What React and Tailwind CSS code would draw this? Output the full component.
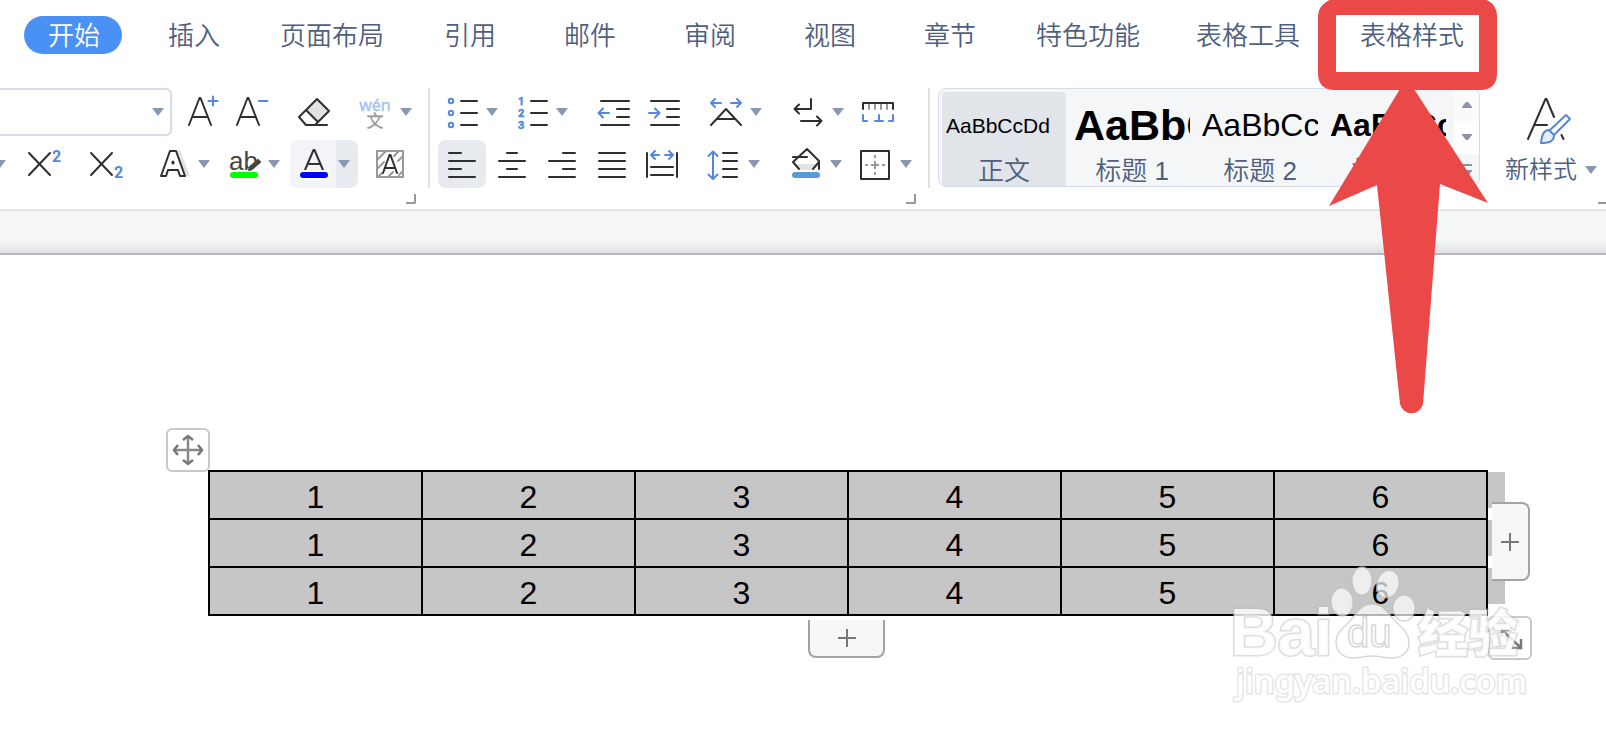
import React, { useState } from 'react';

const TABS = [
  { name: '开始', width: 'w-[98px]' },
  { name: '插入', width: 'w-[98px]' },
  { name: '页面布局', width: 'w-[134px]' },
  { name: '引用', width: 'w-[98px]' },
  { name: '邮件', width: 'w-[98px]' },
  { name: '审阅', width: 'w-[98px]' },
  { name: '视图', width: 'w-[98px]' },
  { name: '章节', width: 'w-[98px]' },
  { name: '特色功能', width: 'w-[134px]' },
  { name: '表格工具', width: 'w-[142px]' },
  { name: '表格样式', width: 'w-[142px]' },
];

const STYLES = [
  { name: '正文', sample: 'AaBbCcDd', look: 'text-[21px]' },
  { name: '标题 1', sample: 'AaBbCc', look: 'text-[43px] font-bold' },
  { name: '标题 2', sample: 'AaBbCc', look: 'text-[32px]' },
  { name: '标题 3', sample: 'AaBbCc', look: 'text-[32px] font-bold' },
];

const ROWS = [
  [1, 2, 3, 4, 5, 6],
  [1, 2, 3, 4, 5, 6],
  [1, 2, 3, 4, 5, 6],
];

const DARK = '#2f2f2f';
const BLUE = '#5588dd';
const GRAY = '#999999';

// Icons share a 40x48 box so that every toolbar row lines up
function Icon({ children, color = DARK }) {
  return (
    <svg className="w-10 h-12 shrink-0" viewBox="0 0 40 48" fill="none" stroke={color} strokeWidth="2" strokeLinecap="round" strokeLinejoin="round">
      {children}
    </svg>
  );
}

function Tool({ label, className = '', children }) {
  return (
    <button aria-label={label} className={`h-12 flex items-center justify-center shrink-0 ${className}`}>
      {children}
    </button>
  );
}

function Triangle({ className = '' }) {
  return (
    <svg className={`w-3 h-2 shrink-0 ${className}`} viewBox="0 0 12 8" fill="#8a97b1">
      <path d="M0 0h12L6 8z" />
    </svg>
  );
}

function Caret({ label, className = '' }) {
  return (
    <button aria-label={label} className={`w-[22px] h-12 flex items-center justify-center shrink-0 ${className}`}>
      <Triangle />
    </button>
  );
}

function Corner() {
  return (
    <div className="flex justify-end pr-3 pt-1.5">
      <button aria-label="更多设置" className="w-2.5 h-2.5 border-r-2 border-b-2 border-[#999999] rounded-br-xs"></button>
    </div>
  );
}

function FontGroup() {
  return (
    <div className="w-[428px] shrink-0">
      <div className="flex">
        <div className="relative w-[172px] h-12 mr-[11px] shrink-0">
          <select aria-label="字号" className="appearance-none w-full h-12 bg-white border-2 border-l-0 border-[#d3dcea] rounded-r-md">
            <option></option>
          </select>
          <Triangle className="absolute right-2 top-5 pointer-events-none" />
        </div>
        <Tool label="增大字号" className="mr-2">
          <Icon>
            <path d="M6 37L16.500 10h1L28 37M9.500 29h15" />
            <path d="M25.500 13h9M30 8.500v9" stroke={BLUE} />
          </Icon>
        </Tool>
        <Tool label="减小字号" className="mr-[23px]">
          <Icon>
            <path d="M6 37L16.500 10h1L28 37M9.500 29h15" />
            <path d="M28 13h8.500" stroke={BLUE} />
          </Icon>
        </Tool>
        <Tool label="清除格式" className="mr-[21px]">
          <Icon>
            <path d="M12 22L23 11l12 12-11 11z" fill="#e2e2e2" stroke="none" />
            <path d="M33 37H12l-7-8L23 11l12 12-13 13M12 22l12 12" />
          </Icon>
        </Tool>
        <Tool label="拼音指南">
          <Icon>
            <text x="20" y="23" textAnchor="middle" fontSize="16" fontFamily="Noto Sans, sans-serif" fill="#a6c2f0" stroke="#a6c2f0" strokeWidth="0.4">wén</text>
            <text x="20" y="39" textAnchor="middle" fontSize="17" fontFamily="Noto Sans CJK SC, sans-serif" fill={GRAY} stroke={GRAY} strokeWidth="0.3">文</text>
          </Icon>
        </Tool>
        <Caret label="拼音指南选项" />
      </div>

      <div className="flex mt-1">
        <button aria-label="下划线选项" className="w-1.5 h-12 mr-[18px] overflow-hidden flex items-center justify-end shrink-0">
          <Triangle />
        </button>
        <Tool label="上标" className="mr-[22px]">
          <Icon>
            <path d="M5 13l21 22M26 13L5 35" />
            <text x="28" y="22" fontSize="16" fontWeight="700" fontFamily="Roboto, sans-serif" fill={BLUE} stroke="none">2</text>
          </Icon>
        </Tool>
        <Tool label="下标" className="mr-[27px]">
          <Icon>
            <path d="M5 13l21 22M26 13L5 35" />
            <text x="28" y="38" fontSize="16" fontWeight="700" fontFamily="Roboto, sans-serif" fill={BLUE} stroke="none">2</text>
          </Icon>
        </Tool>
        <Tool label="文字效果">
          <Icon>
            <path d="M22 10h5l10 26H27z" fill="#e2e2e2" stroke="none" />
            <path d="M8 36l9-25h6l9 25h-5l-2-6H15l-2 6z" fill="#fff" />
            <path d="M20 22v1" stroke={DARK} strokeWidth="3" />
          </Icon>
        </Tool>
        <Caret label="文字效果选项" className="mr-2" />
        <Tool label="突出显示">
          <Icon>
            <text x="6" y="30" fontSize="26" fontFamily="Liberation Sans, sans-serif" fill="#444" stroke="none">ab</text>
            <path d="M27 31l10-10" stroke="#fff" strokeWidth="6" />
            <path d="M27 27l8-7 2 2-8 7-3 1z" stroke="#444" fill="#444" />
            <path d="M10 35h22" stroke="#00ff00" strokeWidth="6" />
          </Icon>
        </Tool>
        <Caret label="突出显示选项" className="mr-[5px]" />
        <Tool label="字体颜色" className="w-[46px] bg-[#f3f4f7] rounded-l-lg">
          <Icon>
            <path d="M12 30l8.500-20h1L30 30M15 24h12" />
            <path d="M10 35h22" stroke="#fff" strokeWidth="10" />
            <path d="M10 35h22" stroke="#0000ff" strokeWidth="6" />
          </Icon>
        </Tool>
        <Caret label="字体颜色选项" className="bg-[#e7eaef] rounded-r-lg pr-1.5 mr-3" />
        <Tool label="字符底纹">
          <Icon>
            <path d="M7 11h26v26H7z" stroke={GRAY} />
            <path d="M8 19l8-8M8 28l6-6M24 16l5-5M28 21l5-5M9 36l3-3M19 36l4-4M29 35l4-4" stroke={GRAY} />
            <path d="M13 33l6.500-18h1L27 33M15 28h10" />
          </Icon>
        </Tool>
      </div>
      <Corner />
    </div>
  );
}

function ParagraphGroup() {
  return (
    <div className="w-[498px] shrink-0">
      <div className="flex pl-[11px]">
        <Tool label="项目符号">
          <Icon>
            <g stroke={BLUE}>
              <circle cx="10" cy="13" r="2.200" />
              <circle cx="10" cy="25" r="2.200" />
              <circle cx="10" cy="37" r="2.200" />
            </g>
            <path d="M20 13h16M20 25h16M20 37h16" />
          </Icon>
        </Tool>
        <Caret label="项目符号选项" className="mr-2" />
        <Tool label="编号">
          <Icon>
            <g fontSize="11" fontWeight="700" fontFamily="Roboto, sans-serif" fill={BLUE} stroke={BLUE} strokeWidth="0.5">
              <text x="7" y="17">1</text>
              <text x="7" y="29">2</text>
              <text x="7" y="41">3</text>
            </g>
            <path d="M20 13h16M20 25h16M20 37h16" />
          </Icon>
        </Tool>
        <Caret label="编号选项" className="mr-[21px]" />
        <Tool label="减少缩进" className="mr-2.5">
          <Icon>
            <path d="M7 13h28M23 21h12M23 29h12M7 37h28" />
            <path d="M15 25H5M9 20.500L4.500 25 9 29.500" stroke={BLUE} />
          </Icon>
        </Tool>
        <Tool label="增加缩进" className="mr-[21px]">
          <Icon>
            <path d="M7 13h28M23 21h12M23 29h12M7 37h28" />
            <path d="M5 25h10M11 20.500l4.500 4.500-4.500 4.500" stroke={BLUE} />
          </Icon>
        </Tool>
        <Tool label="字符缩放">
          <Icon>
            <path d="M6 37l15-16 15 16M12 31h18" />
            <path d="M16 15H6M10 11l-4 4 4 4M26 15h10M32 11l4 4-4 4" stroke={BLUE} />
          </Icon>
        </Tool>
        <Caret label="字符缩放选项" className="mr-5" />
        <Tool label="显示段落标记">
          <Icon>
            <path d="M24 11v10H8M12 16.500L7.500 21l4.500 4.500M14 33h20M30 28.500l4.500 4.500-4.500 4.500" />
          </Icon>
        </Tool>
        <Caret label="段落标记选项" className="mr-[9px]" />
        <Tool label="制表位">
          <Icon>
            <path d="M11 16v5M17 16v5M23 16v5M29 16v5" stroke={GRAY} />
            <path d="M5 21v-6h30v6" />
            <path d="M5 27v6h4M21 27v6M17 33h8M35 27v6h-4" stroke={BLUE} />
          </Icon>
        </Tool>
      </div>

      <div className="flex mt-1 pl-2">
        <Tool label="左对齐" className="w-12 mr-0.5 bg-[#e7eaef] rounded-lg">
          <Icon><path d="M7 13h12M7 21h26M7 29h12M7 37h26" /></Icon>
        </Tool>
        <Tool label="居中" className="w-12 mr-0.5">
          <Icon><path d="M15 13h10M7 21h26M15 29h10M7 37h26" /></Icon>
        </Tool>
        <Tool label="右对齐" className="w-12 mr-0.5">
          <Icon><path d="M21 13h12M7 21h26M21 29h12M7 37h26" /></Icon>
        </Tool>
        <Tool label="两端对齐" className="w-12 mr-0.5">
          <Icon><path d="M7 13h26M7 21h26M7 29h26M7 37h26" /></Icon>
        </Tool>
        <Tool label="分散对齐" className="w-12 mr-[17px]">
          <Icon>
            <path d="M5 13v24M35 13v24M9 27h22M9 35h22" />
            <path d="M17 15H9M13 11l-4 4 4 4M23 15h8M27 11l4 4-4 4" stroke={BLUE} />
          </Icon>
        </Tool>
        <Tool label="行距">
          <Icon>
            <path d="M10 12v26M5.500 16L10 11.500l4.500 4.500M5.500 34.500L10 39l4.500-4.500" stroke={BLUE} />
            <path d="M20 13h14M20 21h14M20 29h14M20 37h14" />
          </Icon>
        </Tool>
        <Caret label="行距选项" className="mr-5" />
        <Tool label="底纹颜色">
          <Icon>
            <path d="M11 24h22l-6 6H15z" fill="#e2e2e2" stroke="none" />
            <path d="M14 29l-6-7L22 9l12 12v8M28 29l6-7M8 17h14" />
            <path d="M10 35h22" stroke="#5b9bd5" strokeWidth="6" />
          </Icon>
        </Tool>
        <Caret label="底纹颜色选项" className="mr-2" />
        <Tool label="边框">
          <Icon>
            <path d="M6 11h28v28H6z" />
            <path d="M10 25h3M16 25h8M27 25h3M20 15v3M20 21v8M20 32v3" stroke={GRAY} strokeLinecap="butt" />
          </Icon>
        </Tool>
        <Caret label="边框选项" />
      </div>
      <Corner />
    </div>
  );
}

function StyleGallery() {
  const [selected, setSelected] = useState('正文');

  return (
    <div className="w-[542px] h-[99px] shrink-0 flex bg-[#f5f6f8] border border-[#d0dbec] rounded-lg overflow-hidden">
      <div className="flex gap-1 pl-[3px] pt-[3px]">
        {STYLES.map((s) => (
          <button
            key={s.name}
            onClick={() => setSelected(s.name)}
            className={`w-[124px] px-1 flex flex-col rounded-t-sm ${selected === s.name ? 'bg-[#e1e4e9]' : ''}`}
          >
            <span className={`w-full h-[66px] overflow-hidden whitespace-nowrap text-left leading-[67px] text-black ${s.look}`}>{s.sample}</span>
            <span className="w-full text-center text-[26px] leading-[26px] text-[#4f5f80] font-[350]">{s.name}</span>
          </button>
        ))}
      </div>
      <div className="flex-1 ml-1 flex flex-col">
        <button aria-label="上一行" className="flex-1 flex items-center justify-center bg-[#fafafb]">
          <svg className="w-2.5 h-1.5" viewBox="0 0 10 6" fill="#8a93a5"><path d="M0 6V5l4-5h2l4 5v1z" /></svg>
        </button>
        <button aria-label="下一行" className="flex-1 flex items-center justify-center bg-white">
          <svg className="w-2.5 h-1.5" viewBox="0 0 10 6" fill="#8a93a5"><path d="M0 0v1l4 5h2l4-5V0z" /></svg>
        </button>
        <button aria-label="展开样式" className="flex-1 flex items-center justify-center bg-[#f5f6f8]">
          <svg className="w-2.5 h-3" viewBox="0 0 10 12" fill="#8a93a5"><path d="M0 0h10v2H0zM0 6v1l4 5h2l4-5V6z" /></svg>
        </button>
      </div>
    </div>
  );
}

function NewStyle() {
  return (
    <div className="flex-1 min-w-[124px]">
      <div className="h-[108px] pl-[25px] pt-2">
        <button className="flex flex-col">
          <svg className="w-12 h-12 ml-5" viewBox="0 0 48 48" fill="none" stroke={DARK} strokeWidth="2" strokeLinecap="round" strokeLinejoin="round">
            <path d="M3 43L20.500 3h1L29 21M10 29h12M36.500 39l2 4" />
            <path d="M25 34l16-15 4 4-16 16" stroke={BLUE} />
            <path d="M24 34c-5 0-7 4-8 13 7 0 13-1 13-8z" stroke={BLUE} fill="#e8effb" />
          </svg>
          <span className="flex items-center gap-2 text-2xl leading-[52px] text-[#4f5f80] font-[350] whitespace-nowrap">
            新样式
            <Triangle />
          </span>
        </button>
      </div>
      <div className="flex justify-end pt-1.5">
        <div className="w-2 h-0.5 bg-[#999999]"></div>
      </div>
    </div>
  );
}

function Plus() {
  return (
    <svg className="w-5 h-5" viewBox="0 0 20 20" stroke="#777" strokeWidth="2">
      <path d="M1 10h18M10 1v18" />
    </svg>
  );
}

function DocumentTable() {
  return (
    <div className="relative ml-[208px] mr-[118px] mt-[215px]">
      <table className="w-full table-fixed border-collapse bg-[#c6c6c6] text-black text-[32px] leading-[42px] text-center">
        <tbody>
          {ROWS.map((row, i) => (
            <tr key={i}>
              {row.map((cell) => (
                <td key={cell} className="border-2 border-black p-0 pt-1">{cell}</td>
              ))}
            </tr>
          ))}
        </tbody>
      </table>

      {/* Маркеры конца строк */}
      <div className="absolute left-full top-0.5 flex flex-col gap-3">
        {ROWS.map((_, i) => (
          <div key={i} className="w-[17px] h-9 bg-[#c6c6c6]"></div>
        ))}
      </div>

      <button aria-label="移动表格" className="absolute right-full bottom-full -mr-0.5 -mb-0.5 w-11 h-11 flex items-center justify-center bg-white border-2 border-[#c9c9c9] rounded-md">
        <svg className="w-8 h-8 shrink-0" viewBox="0 0 32 32" fill="none" stroke="#888" strokeWidth="2.500">
          <path d="M16 3v26M3 16h26" />
          <path d="M11 6l5-4 5 4M11 26l5 4 5-4M6 11l-4 5 4 5M26 11l4 5-4 5" stroke="#777" />
        </svg>
      </button>

      <button aria-label="添加列" className="absolute left-full top-8 ml-1 w-[38px] h-[79px] flex items-center justify-center bg-[#f7f7f7] border-2 border-l-0 border-[#a3a3a3] rounded-r-lg">
        <Plus />
      </button>
      <button aria-label="添加行" className="absolute left-[600px] top-full mt-1 w-[77px] h-[38px] flex items-center justify-center bg-[#f7f7f7] border-2 border-t-0 border-[#a3a3a3] rounded-b-lg">
        <Plus />
      </button>
      <button aria-label="缩放表格" className="absolute left-full top-full w-11 h-11 flex items-center justify-center bg-white border-2 border-[#c9c9c9] rounded-md">
        <svg className="w-8 h-8 shrink-0" viewBox="0 0 32 32" fill="none" stroke="#777" strokeWidth="2.500">
          <path d="M8 8l18 17M8 15V8h7M27 17v9h-9" />
        </svg>
      </button>
    </div>
  );
}

function Watermark() {
  return (
    <svg className="absolute left-[1220px] top-[560px] w-[320px] h-[150px] pointer-events-none" viewBox="0 0 320 150">
      <g fill="#ffffff" fillOpacity="0.700" stroke="#bdbdbd" strokeOpacity="0.600" strokeWidth="1.500">
        <ellipse cx="122" cy="42" rx="11" ry="14" transform="rotate(-5 122 42)" />
        <ellipse cx="142" cy="21" rx="10" ry="14" />
        <ellipse cx="168" cy="24" rx="11" ry="14" transform="rotate(15 168 24)" />
        <ellipse cx="184" cy="48" rx="11" ry="13" />
        <path d="M152 44c12 0 17 11 25 19 8 7 12 12 12 20 0 10-8 15-18 15-7 0-12-2-19-2s-12 2-18 2c-11 0-18-6-18-16 0-9 6-13 12-19 8-8 12-19 24-19z" />
        <g fontFamily="Liberation Sans, Noto Sans CJK SC, sans-serif" fontWeight="700">
          <text x="10" y="95" fontSize="66" strokeWidth="3" paintOrder="stroke" strokeOpacity="0.500" fillOpacity="0.800">Bai</text>
          <text x="127" y="87" fontSize="40" fontWeight="400">du</text>
          <text x="198" y="92" fontSize="50" fontFamily="Noto Sans CJK SC, sans-serif" fontWeight="900" strokeWidth="3" paintOrder="stroke" strokeOpacity="0.500" fillOpacity="0.800">经验</text>
        </g>
        <text x="16" y="133" fontSize="33" fontFamily="Noto Sans, sans-serif" fontWeight="500" strokeWidth="3" strokeOpacity="0.400" paintOrder="stroke" fillOpacity="1">jingyan.baidu.com</text>
      </g>
    </svg>
  );
}

// Red frame round the table style tab with the arrow under it
function Pointer() {
  return (
    <svg className="absolute left-[1310px] top-0 w-[200px] h-[430px] pointer-events-none" viewBox="0 0 200 430" fill="#eb4848">
      <path fillRule="evenodd" d="M24-2h147q16 4 16 18v57q0 17-17 17H25Q8 90 8 73V16Q8 4 24-2zM26 15v57h143V15z" />
      <path d="M90 89q7-6 14 0l74 114-48-19-17 220a12 13 0 0 1-23 0L67 185l-48 21z" />
    </svg>
  );
}

export default function App() {
  const [activeTab, setActiveTab] = useState('开始');

  return (
    <div className="relative min-h-screen bg-white overflow-hidden font-['Liberation_Sans','Noto_Sans_CJK_SC',sans-serif]">
      <header>
        <nav className="flex gap-[22px] pl-6 pt-4">
          {TABS.map((tab) => (
            <button
              key={tab.name}
              onClick={() => setActiveTab(tab.name)}
              className={`${tab.width} h-[38px] pt-0.5 pl-0.5 shrink-0 rounded-full text-[26px] leading-[36px] font-[350] whitespace-nowrap ${activeTab === tab.name ? 'bg-[#4a91f6] text-white' : 'text-[#4f5f80]'}`}
            >
              {tab.name}
            </button>
          ))}
        </nav>

        <div className="flex items-start pt-[34px] pb-[5px]">
          <FontGroup />
          <div className="w-0.5 h-[100px] bg-[#e2e2e4] shrink-0"></div>
          <ParagraphGroup />
          <div className="w-0.5 h-[100px] bg-[#e2e2e4] shrink-0 mr-2"></div>
          <StyleGallery />
          <NewStyle />
        </div>
      </header>

      <div className="h-[46px] border-t-2 border-b-2 border-t-[#e3e4e9] border-b-[#b5b8c4] bg-linear-to-b from-[#f5f6f8] from-70% to-[#dfe0e2]"></div>

      <main>
        <DocumentTable />
      </main>

      <Watermark />
      <Pointer />
    </div>
  );
}
